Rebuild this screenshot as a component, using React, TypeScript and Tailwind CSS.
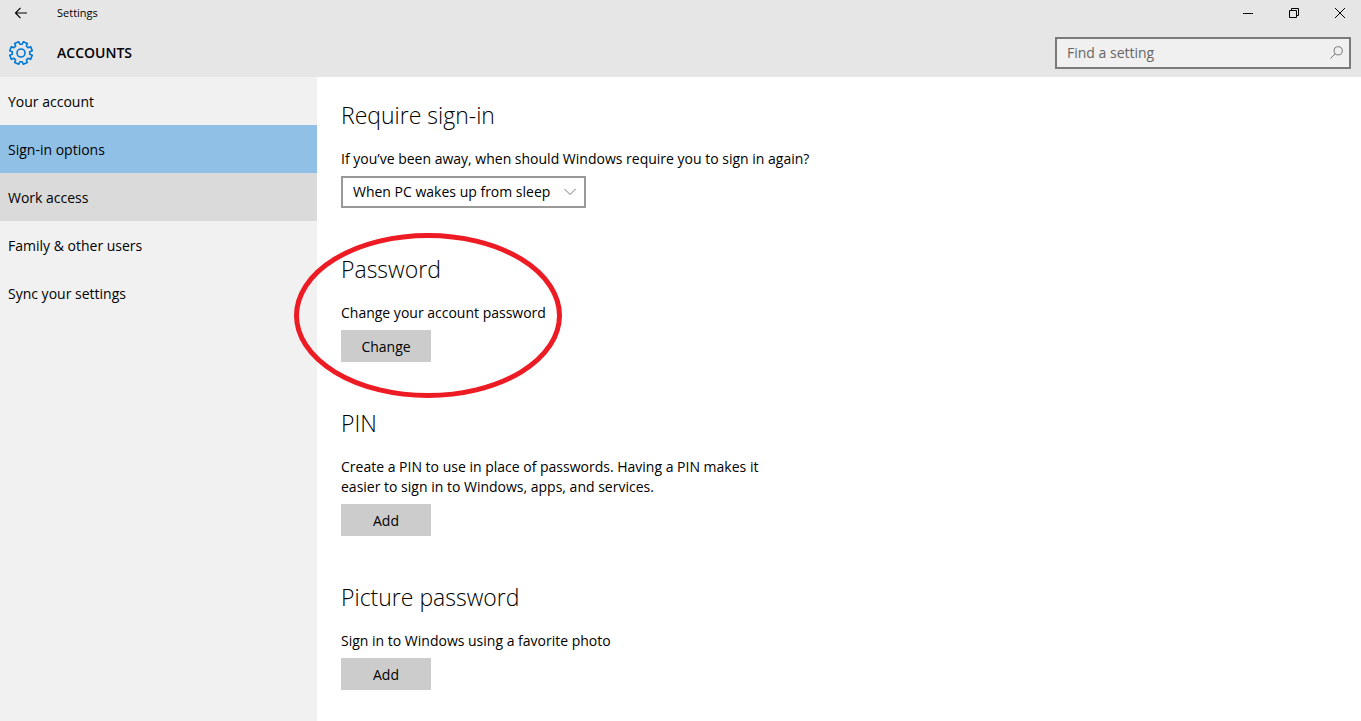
import React, { useState } from 'react';

const navItems = ['Your account', 'Sign-in options', 'Work access', 'Family & other users', 'Sync your settings'];

// Outline of the settings cog, one tooth per step around the hub
const teeth = 8;
const cogPoint = (radius: number, degrees: number) => {
  const angle = (degrees * Math.PI) / 180;
  return `${(13 + radius * Math.sin(angle)).toFixed(2)} ${(13 - radius * Math.cos(angle)).toFixed(2)}`;
};
const cogPath = 'M' + Array.from({ length: teeth }, (_, i) => {
  const mid = (i + 0.5) * (360 / teeth);
  return [cogPoint(8.8, mid - 15), cogPoint(11.5, mid - 11), cogPoint(11.5, mid + 11), cogPoint(8.8, mid + 15)].join('L');
}).join('L') + 'Z';

function CogIcon() {
  return (
    <svg width="26" height="26" viewBox="0 0 26 26" fill="none" stroke="#0078d7" strokeWidth="1.6" strokeLinejoin="round">
      <path d={cogPath} />
      <circle cx="13" cy="13" r="4" />
    </svg>
  );
}

function Section({ title, text, children }: { title: string; text: React.ReactNode; children: React.ReactNode }) {
  return (
    <section>
      <h2 className="mb-[18px] text-[23px] leading-8 font-light text-black">{title}</h2>
      {text}
      <div className="mt-[7px] flex">{children}</div>
    </section>
  );
}

function ActionButton({ label }: { label: string }) {
  return <button className="h-8 min-w-[90px] bg-[#ccc] px-4 pt-0.5 hover:bg-[#bbb]">{label}</button>;
}

export default function App() {
  const [active, setActive] = useState('Sign-in options');
  const [search, setSearch] = useState('');
  const [requireSignIn, setRequireSignIn] = useState('wake');

  return (
    <div className="flex min-h-screen flex-col bg-white font-['Open_Sans',sans-serif] text-[14px] leading-5 text-black">
      <header className="bg-[#e6e6e6]">
        <div className="flex h-[26px] items-center">
          <button aria-label="Back" className="flex w-[42px] justify-center">
            <svg width="14" height="12" viewBox="0 0 14 12" fill="none" stroke="#000" strokeWidth="1.2">
              <path d="M6.5 .8L1.5 6L6.5 11.2M1.5 6H13" />
            </svg>
          </button>
          <span className="ml-[15px] flex-1 text-[11px]">Settings</span>
          <div className="flex">
            <button aria-label="Minimize" className="flex h-[26px] w-[46px] items-center justify-center">
              <svg width="10" height="10" viewBox="0 0 10 10" stroke="#000"><path d="M0 5.5H10" /></svg>
            </button>
            <button aria-label="Restore" className="flex h-[26px] w-[46px] items-center justify-center">
              <svg width="10" height="10" viewBox="0 0 10 10" fill="none" stroke="#000">
                <path d="M.5 2.5H7.5V9.5H.5ZM2.5 2.5V.5H9.5V7.5H7.5" />
              </svg>
            </button>
            <button aria-label="Close" className="flex h-[26px] w-11 items-center justify-center pl-0.5">
              <svg width="10" height="10" viewBox="0 0 10 10" stroke="#000"><path d="M0 0L10 10M10 0L0 10" /></svg>
            </button>
          </div>
        </div>
        <div className="flex h-[51px] items-center pt-0.5 pr-[10px]">
          <div className="flex w-[42px] justify-center"><CogIcon /></div>
          <h1 className="ml-[15px] flex-1 text-[14px] font-semibold">ACCOUNTS</h1>
          <label className="flex h-8 w-[296px] items-center border-2 border-[#7a7a7a] bg-[#f0f0f0] pr-[6px] pl-[10px]">
            <input
              type="text"
              aria-label="Find a setting"
              placeholder="Find a setting"
              className="min-w-0 flex-1 bg-transparent outline-none placeholder:text-[#666]"
              value={search}
              onChange={(e) => setSearch(e.target.value)}
            />
            <svg width="13" height="13" viewBox="0 0 13 13" fill="none" stroke="#777">
              <circle cx="8.2" cy="4.8" r="4.1" />
              <path d="M5.2 7.8L.5 12.5" />
            </svg>
          </label>
        </div>
      </header>

      <div className="flex flex-1">
        <nav className="w-[317px] shrink-0 bg-[#f1f1f1]">
          {navItems.map((item) => (
            <a
              key={item}
              href="#"
              onClick={() => setActive(item)}
              className={
                'flex h-12 items-center px-2 pt-0.5 ' +
                (item === active ? 'bg-[#91c0e7]' : item === 'Work access' ? 'bg-[#dadada]' : 'hover:bg-[#dadada]')
              }
            >
              {item}
            </a>
          ))}
        </nav>

        <main className="flex flex-1 flex-col gap-[45px] px-6 pt-[22px] pb-[31px]">
          <Section title="Require sign-in" text={<label htmlFor="requireSignIn" className="block">If you’ve been away, when should Windows require you to sign in again?</label>}>
            <div className="relative">
              <select
                id="requireSignIn"
                value={requireSignIn}
                onChange={(e) => setRequireSignIn(e.target.value)}
                className="block h-8 w-[245px] appearance-none border-2 border-[#999] bg-white px-[10px]"
              >
                <option value="wake">When PC wakes up from sleep</option>
                <option value="never">Never</option>
              </select>
              <svg className="pointer-events-none absolute top-3 right-[10px]" width="12" height="8" viewBox="0 0 12 8" fill="none" stroke="#777">
                <path d="M.5 1L6 6.5L11.5 1" />
              </svg>
            </div>
          </Section>

          <div className="relative">
            <Section title="Password" text={<p>Change your account password</p>}>
              <ActionButton label="Change" />
            </Section>
            {/* red ring around the password section */}
            <svg className="pointer-events-none absolute -top-5 -left-[47px]" width="268" height="166" viewBox="0 0 268 166" fill="none">
              <ellipse cx="134" cy="82.5" rx="131.5" ry="80" stroke="#ed1c24" strokeWidth="5" />
            </svg>
          </div>

          <Section title="PIN" text={<p className="max-w-[440px]">Create a PIN to use in place of passwords. Having a PIN makes it easier to sign in to Windows, apps, and services.</p>}>
            <ActionButton label="Add" />
          </Section>

          <Section title="Picture password" text={<p>Sign in to Windows using a favorite photo</p>}>
            <ActionButton label="Add" />
          </Section>
        </main>
      </div>
    </div>
  );
}
